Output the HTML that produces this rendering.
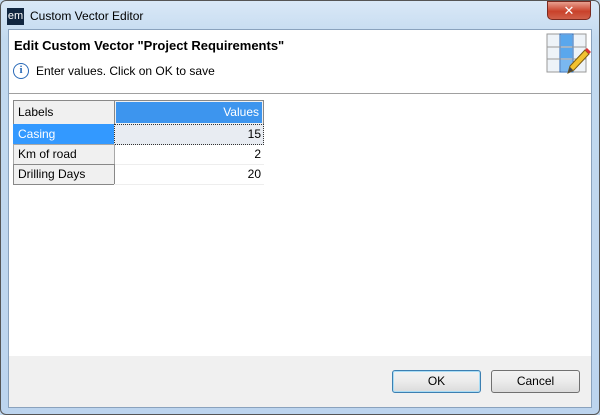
<!DOCTYPE html>
<html><head><style>
*{margin:0;padding:0;box-sizing:border-box}
body{width:600px;height:415px;position:relative;overflow:hidden;font-family:"Liberation Sans","DejaVu Sans",sans-serif;font-size:12px;color:#000;background:#c4daf0}
.frame{position:absolute;left:0;top:0;width:600px;height:415px;background:linear-gradient(#d9e8f7,#c2d9ef 40px,#bcd4ee);border:1px solid #555;border-radius:6px}
.client{position:absolute;left:8px;top:29px;width:584px;height:379px;background:#fff;border:1px solid #8aa2bd}
.abs{position:absolute}
.cell{position:absolute;border:1px solid #a8a8a8;padding-left:4px;line-height:19px;font-size:12px}
</style></head><body>
<div class="frame"></div>
<div class="abs" style="left:7px;top:8px;width:17px;height:17px;background:#10253f;color:#fff;font-size:11px;line-height:16px;text-align:center">em</div>
<div class="abs" style="left:30px;top:8px;font-size:12px;line-height:16px">Custom Vector Editor</div>
<div class="abs" style="left:547px;top:1px;width:44px;height:19px;border-radius:0 0 5px 5px;background:linear-gradient(#e8a08f,#c9412a 55%,#d0604a);border:1px solid #7a2a20;color:#fff;text-align:center;font-weight:bold;font-size:13px;line-height:17px">✕</div>
<div class="client">
  <div class="abs" style="left:0;top:0;width:582px;height:64px;background:#fff;border-bottom:1px solid #a0a0a0"></div>
  <div class="abs" style="left:5px;top:8px;font-weight:bold;font-size:13px">Edit Custom Vector "Project Requirements"</div>
  <div class="abs" style="left:4px;top:33px;width:16px;height:16px;border:1.5px solid #2a6ab8;border-radius:50%;color:#2a6ab8;font-size:11px;font-weight:bold;text-align:center;line-height:13px;font-family:'Liberation Serif',serif">i</div>
  <div class="abs" style="left:27px;top:34px;font-size:12px;line-height:14px">Enter values. Click on OK to save</div>
  <svg class="abs" style="left:537px;top:2px" width="46" height="46" viewBox="0 0 46 46">
    <rect x="1" y="2" width="39" height="38" fill="#eef3f8" stroke="#999"/>
    <rect x="14" y="2" width="13" height="38" fill="#a9d0f5" stroke="#2a6ab8"/>
    <rect x="15" y="3" width="11" height="11" fill="#5aa7ec"/>
    <rect x="15" y="16" width="11" height="10" fill="#5aa7ec"/>
    <rect x="15" y="28" width="11" height="11" fill="#7ab8f0"/>
    <line x1="1" y1="15" x2="40" y2="15" stroke="#999"/><line x1="1" y1="27" x2="40" y2="27" stroke="#999"/>
    <path d="M22 41 L24 34 L39 18 L43 22 L28 38 Z" fill="#f2c230" stroke="#7a5a10"/>
    <path d="M39 18 L41 16 L45 20 L43 22Z" fill="#d33"/>
    <path d="M22 41 L24 35 L27 38Z" fill="#444"/>
  </svg>
  <div class="abs" style="left:4px;top:70px;width:251px;height:86px;background:#fff"></div>
  <div class="cell" style="left:4px;top:70px;width:102px;height:25px;background:#f0f0f0;border:1px solid #888;line-height:23px">Labels</div>
  <div class="abs" style="left:105px;top:70px;width:150px;height:25px;border:1px solid #888;background:#f0f0f0"></div>
  <div class="abs" style="left:107px;top:72px;width:146px;height:21px;background:#3d95ee;color:#fff;text-align:right;padding-right:3px;line-height:21px">Values</div>
  <div class="cell" style="left:4px;top:94px;width:102px;height:21px;background:#3399ff;color:#fff;border-color:#3399ff">Casing</div>
  <div class="abs" style="left:105px;top:94px;width:150px;height:21px;background:#e8ecf2;border:1px dotted #333;text-align:right;padding-right:2px;line-height:19px">15</div>
  <div class="cell" style="left:4px;top:114px;width:102px;height:21px;background:#f0f0f0">Km of road</div>
  <div class="abs" style="left:105px;top:114px;width:150px;height:21px;border-bottom:1px solid #eee;text-align:right;padding-right:3px;line-height:20px">2</div>
  <div class="cell" style="left:4px;top:134px;width:102px;height:21px;background:#f0f0f0;border-color:#888">Drilling Days</div>
  <div class="abs" style="left:105px;top:134px;width:150px;height:21px;border-bottom:1px solid #eee;text-align:right;padding-right:3px;line-height:20px">20</div>
  <div class="abs" style="left:0;top:326px;width:582px;height:51px;background:#f0f0f0"></div>
  <div class="abs" style="left:383px;top:340px;width:89px;height:23px;border:1px solid #3c7fb1;border-radius:3px;background:linear-gradient(#f2f2f2,#ebebeb 50%,#dbdbdb);box-shadow:inset 0 0 0 1px #a8dcf5;text-align:center;line-height:21px">OK</div>
  <div class="abs" style="left:482px;top:340px;width:89px;height:23px;border:1px solid #707070;border-radius:3px;background:linear-gradient(#f2f2f2,#ebebeb 50%,#dbdbdb);text-align:center;line-height:21px">Cancel</div>
</div>
</body></html>
